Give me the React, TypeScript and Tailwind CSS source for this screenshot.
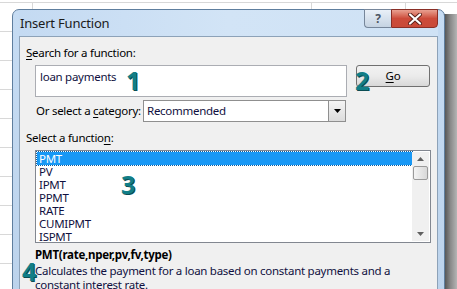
const FONT = { fontFamily: '"Noto Sans", "Open Sans", "DejaVu Sans", sans-serif' };

const FUNCTIONS = ["PMT", "PV", "IPMT", "PPMT", "RATE", "CUMIPMT", "ISPMT"];

function SheetGrid() {
  const rows = Array.from({ length: 11 });
  return (
    <div className="absolute inset-0 flex flex-col bg-white">
      <div className="h-[3px] shrink-0 border-b border-[#d8d8d8]" />
      {rows.map((_, i) => (
        <div key={i} className="grid h-[29px] shrink-0 grid-cols-[33px_279px_94px_1fr] border-b border-[#d8d8d8]">
          <div className="border-r border-[#d8d8d8]" />
          <div className="border-r border-[#d8d8d8]" />
          <div className="border-r border-[#d8d8d8]" />
          <div />
        </div>
      ))}
    </div>
  );
}

function Badge({ n, className }: { n: string; className: string }) {
  return (
    <span
      className={"absolute text-[25px] font-bold leading-none text-[#127e87] " + className}
      style={{ ...FONT, textShadow: "1px 1px 0 #0b4d53" }}
    >
      {n}
    </span>
  );
}

export default function App() {
  return (
    <div className="relative h-[289px] w-[457px] overflow-hidden" style={FONT}>
      <SheetGrid />

      {/* window shadow */}
      <div className="absolute left-[444px] top-[14px] h-[280px] w-[13px] bg-gradient-to-r from-[#4f4f4f] via-[#8a8a8a] to-[#b5b5b5]" />

      {/* dialog */}
      <div className="absolute left-[12px] top-[9px] flex h-[290px] w-[433px] flex-col rounded-t-[7px] border border-[#5f7e9e] bg-gradient-to-b from-[#c6dcf3] to-[#bcd3ec] px-[6px]">
        {/* title bar */}
        <div className="relative flex h-[26px] shrink-0 items-center bg-gradient-to-r from-[#c4daf2] via-[#d2e4f6] to-[#cfe2f5]">
          <span className="pl-[1px] pt-[1px] text-[13px] tracking-[-0.2px] text-[#1b1b1b]">Insert Function</span>
          <div className="absolute right-0 top-[-1px] flex h-[19px]">
            <div className="flex w-[27px] items-center justify-center rounded-bl-[4px] border border-r-0 border-[#76869a] bg-gradient-to-b from-[#e9f0f8] to-[#c5d3e2] text-[12px] font-bold text-[#4b5563]">
              ?
            </div>
            <div className="flex w-[47px] items-center justify-center rounded-br-[4px] border border-[#8a2f26] bg-gradient-to-b from-[#e8a091] via-[#cc4b3a] to-[#c94a38]">
              <svg width="14" height="12" viewBox="0 0 14 12">
                <path d="M2 1.5 L12 10.5 M12 1.5 L2 10.5" stroke="#5a2019" strokeWidth="4" strokeLinecap="round" />
                <path d="M2 1.5 L12 10.5 M12 1.5 L2 10.5" stroke="#ffffff" strokeWidth="2.2" strokeLinecap="round" />
              </svg>
            </div>
          </div>
        </div>

        {/* client area */}
        <div className="flex flex-1 flex-col whitespace-nowrap border border-[#8da2b8] bg-[#f0f0f0] text-[11.5px] tracking-[-0.27px] text-black">
          <div className="ml-[6px] mt-[8px] h-[16px] leading-[16px]">
            <span className="underline underline-offset-2">S</span>earch for a function:
          </div>

          <div className="ml-[15px] mt-[4px] flex items-start">
            <div className="h-[32px] w-[312px] border border-[#abadb3] bg-white px-[4px] pt-[3px] leading-[16px] text-[#101040]">
              loan payments
            </div>
            <div className="ml-[9px] flex h-[22px] w-[74px] items-center justify-center rounded-[3px] border border-[#707070] bg-gradient-to-b from-[#f2f2f2] via-[#ebebeb] to-[#d8d8d8]">
              <span className="underline underline-offset-2">G</span>o
            </div>
          </div>

          <div className="ml-[16px] mt-[3px] flex items-center">
            <div className="w-[107px] leading-[16px]">
              Or select a <span className="underline underline-offset-2">c</span>ategory:
            </div>
            <div className="flex h-[22px] w-[203px] items-center border border-[#8f8f8f] bg-white">
              <span className="flex-1 pl-[3px] text-[#101040]">Recommended</span>
              <div className="flex h-full w-[17px] items-center justify-center border-l border-[#8f8f8f] bg-gradient-to-b from-[#f4f4f4] to-[#dcdcdc]">
                <svg width="7" height="4" viewBox="0 0 7 4">
                  <path d="M0 0 H7 L3.5 4 Z" fill="#000" />
                </svg>
              </div>
            </div>
          </div>

          <div className="ml-[6px] mt-[8px] h-[16px] leading-[16px]">
            Select a functio<span className="underline underline-offset-2">n</span>:
          </div>

          <div className="ml-[15px] mt-[4px] flex h-[93px] w-[396px] border border-[#828790] bg-white p-[1px]">
            <div className="flex flex-1 flex-col">
              {FUNCTIONS.map((f, i) => (
                <div
                  key={f}
                  className={
                    "flex h-[13px] items-center pl-[2px] leading-[13px] " +
                    (i === 0 ? "bg-[#1898f5] text-white outline-1 outline-dotted outline-[#0a5ea0]" : "text-[#101040]")
                  }
                >
                  {f}
                </div>
              ))}
            </div>
            <div className="flex w-[17px] flex-col items-center bg-[#f0f0f0]">
              <svg className="mt-[5px]" width="7" height="4" viewBox="0 0 7 4">
                <path d="M3.5 0 L7 4 H0 Z" fill="#606060" />
              </svg>
              <div className="mt-[5px] h-[14px] w-[15px] rounded-[2px] border border-[#9a9a9a] bg-gradient-to-r from-[#f4f4f4] to-[#d8d8d8]" />
              <div className="flex-1" />
              <svg className="mb-[5px]" width="7" height="4" viewBox="0 0 7 4">
                <path d="M0 0 H7 L3.5 4 Z" fill="#606060" />
              </svg>
            </div>
          </div>

          <div className="ml-[15px] mt-[4px] h-[16px] font-bold leading-[16px]">PMT(rate,nper,pv,fv,type)</div>
          <div className="ml-[15px] mt-[1px] leading-[14px] text-[#101040]">
            Calculates the payment for a loan based on constant payments and a
            <br />
            constant interest rate.
          </div>
        </div>
      </div>

      <Badge n="1" className="left-[126px] top-[68px]" />
      <Badge n="2" className="left-[355px] top-[68px]" />
      <Badge n="3" className="left-[121px] top-[172px]" />
      <Badge n="4" className="left-[22px] top-[259px]" />
    </div>
  );
}
